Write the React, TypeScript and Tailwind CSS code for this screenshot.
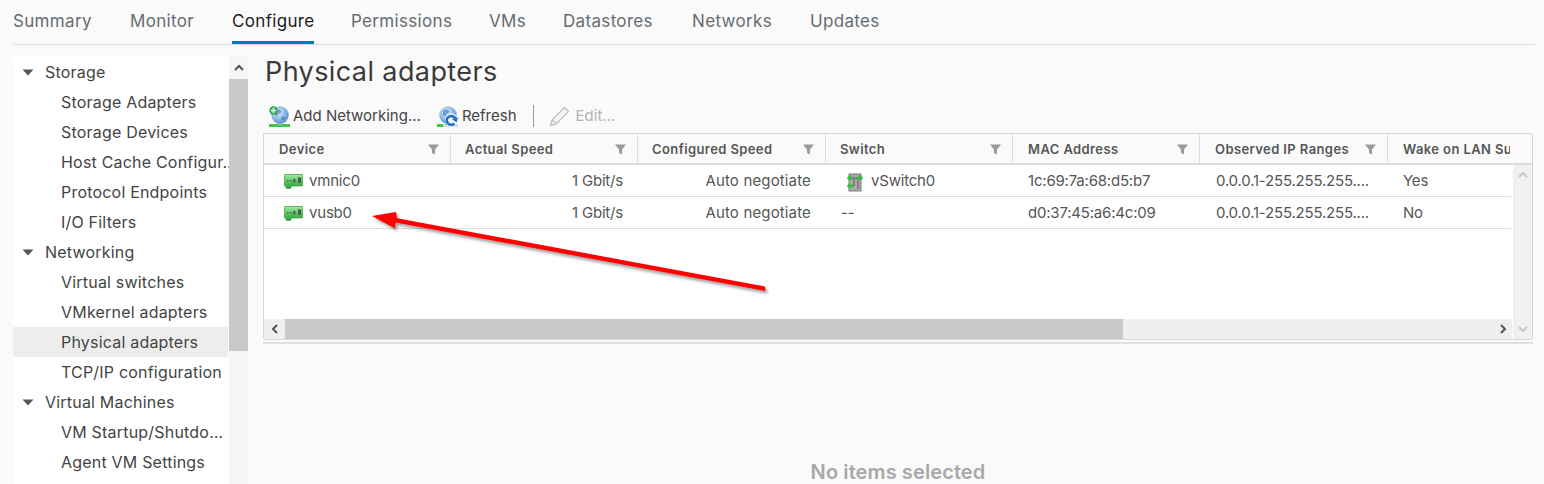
const font = { fontFamily: '"Inter", "Noto Sans", sans-serif' };

function Nic() {
  return (
    <svg width="19" height="17" viewBox="0 0 19 17" className="shrink-0">
      <defs>
        <linearGradient id="nicg" x1="0" y1="0" x2="0" y2="1">
          <stop offset="0" stopColor="#a5e8a0" />
          <stop offset="0.55" stopColor="#58c060" />
          <stop offset="1" stopColor="#2f9e3f" />
        </linearGradient>
      </defs>
      <path d="M0.5 1.5H18.5V13H7.5L6.5 15.5H2.5L1.5 13H0.5Z" fill="url(#nicg)" stroke="#45a34e" strokeWidth="0.8" />
      <rect x="3" y="7" width="1.6" height="1.6" fill="#4d6f55" />
      <rect x="6" y="7" width="1.6" height="1.6" fill="#4d6f55" />
      <rect x="9" y="6" width="2.6" height="3.4" fill="#4d6f55" />
      <rect x="14" y="4.5" width="3" height="5.5" fill="#43604b" />
    </svg>
  );
}

function Funnel() {
  return (
    <svg width="11" height="11" viewBox="0 0 11 11" className="shrink-0">
      <path d="M0 0.5H11L7 5.5V10.5L4 9V5.5Z" fill="#9a9a9a" />
    </svg>
  );
}

function Globe({ kind }: { kind: "add" | "refresh" }) {
  return (
    <svg width="21" height="21" viewBox="0 0 21 21" className="shrink-0">
      <defs>
        <radialGradient id={"gl" + kind} cx="0.4" cy="0.35" r="0.7">
          <stop offset="0" stopColor="#e4f2fc" />
          <stop offset="1" stopColor="#4a8fd2" />
        </radialGradient>
      </defs>
      <rect x="0" y="18" width="21" height="3" fill={kind === "add" ? "#43c743" : "#d5dde3"} />
      {kind === "refresh" && <rect x="0" y="18" width="6" height="3" fill="#43c743" />}
      <rect x="8.5" y="15" width="4" height="4" fill="#a8bac8" />
      <circle cx="11" cy="9" r="8.7" fill={`url(#gl${kind})`} />
      <path d="M6 5c2-2 5-2 6 0s-2 2-3 4-3 1-3-1zM13 11c2-1 3 0 3 1s-2 3-3 2-1-2 0-3z" fill="#2e6fb5" opacity="0.6" />
      {kind === "add" && (
        <>
          <circle cx="4.5" cy="4.5" r="4.2" fill="#2fa84f" />
          <path d="M4.5 1.8V7.2M1.8 4.5H7.2" stroke="#e5fae5" strokeWidth="1.6" />
        </>
      )}
      {kind === "refresh" && (
        <>
          <circle cx="14.5" cy="14" r="6.4" fill="#fff" opacity="0.9" />
          <path d="M18.5 13.5a4.4 4.4 0 1 0-1 3.8" fill="none" stroke="#1d6fc4" strokeWidth="2.6" />
          <path d="M21 11L19.6 16.4L15.2 13.2Z" fill="#1d6fc4" />
        </>
      )}
    </svg>
  );
}

function Pencil() {
  return (
    <svg width="21" height="21" viewBox="0 0 21 21" className="shrink-0">
      <path d="M15.5 1.5L19.5 5.5L7 18L1.5 19.5L3 14Z" fill="#f4f4f4" stroke="#c4c4c4" strokeWidth="1.5" strokeLinejoin="round" />
      <path d="M3.5 14L7 17.5" stroke="#c4c4c4" strokeWidth="1.2" />
    </svg>
  );
}

function SwitchIcon() {
  return (
    <svg width="20" height="20" viewBox="0 0 20 20" className="shrink-0">
      <rect x="4" y="2" width="12" height="17" fill="#a9a9a9" stroke="#7c7c7c" />
      <path d="M2 6H18M2 14H9M9 6V14M13 6V17" stroke="#5f5f5f" strokeWidth="1" fill="none" />
      <circle cx="5" cy="6" r="2.4" fill="#36c23f" />
      <circle cx="15" cy="6" r="2.4" fill="#36c23f" />
      <circle cx="5" cy="14" r="2.4" fill="#36c23f" />
    </svg>
  );
}

function Caret() {
  return (
    <svg width="12" height="7" viewBox="0 0 12 7" className="shrink-0">
      <path d="M0.5 0.5H11.5L6 6.5Z" fill="#565656" />
    </svg>
  );
}

function Chevron({ d, color, size = 12 }: { d: string; color: string; size?: number }) {
  return (
    <svg width={size} height={size} viewBox="0 0 12 12" className="shrink-0">
      <path d={d} fill="none" stroke={color} strokeWidth="2" />
    </svg>
  );
}

const side: { t: string; group?: boolean; sel?: boolean }[] = [
  { t: "Storage", group: true },
  { t: "Storage Adapters" },
  { t: "Storage Devices" },
  { t: "Host Cache Configur…" },
  { t: "Protocol Endpoints" },
  { t: "I/O Filters" },
  { t: "Networking", group: true },
  { t: "Virtual switches" },
  { t: "VMkernel adapters" },
  { t: "Physical adapters", sel: true },
  { t: "TCP/IP configuration" },
  { t: "Virtual Machines", group: true },
  { t: "VM Startup/Shutdo…" },
  { t: "Agent VM Settings" },
];

const cols = ["Device", "Actual Speed", "Configured Speed", "Switch", "MAC Address", "Observed IP Ranges", "Wake on LAN Su"];

const gridCols = "grid grid-cols-[187px_187px_188px_187px_187px_188px_123px]";
const cell = "flex items-center pt-[2px] text-[15px] text-[#565656] whitespace-nowrap tracking-[-0.2px]";

function Row({ dev, sw, mac, wake }: { dev: string; sw: React.ReactNode; mac: string; wake: string }) {
  return (
    <div className={`${gridCols} h-[32px] border-b border-[#dedede] mr-[1px]`}>
      <div className={`${cell} pl-[20px] gap-[6px]`}>
        <Nic />
        <span>{dev}</span>
      </div>
      <div className={`${cell} justify-end pr-[15px]`}>1 Gbit/s</div>
      <div className={`${cell} justify-end pr-[15px] tracking-[0.15px]`}>Auto negotiate</div>
      <div className={`${cell} pl-[15px]`}>{sw}</div>
      <div className={`${cell} pl-[15px]`}>{mac}</div>
      <div className={`${cell} pl-[16px]`}>0.0.0.1-255.255.255....</div>
      <div className={`${cell} pl-[15px]`}>{wake}</div>
    </div>
  );
}

export default function App() {
  return (
    <div style={font} className="relative w-[1544px] h-[484px] overflow-hidden bg-[#fafafa]">
      <div className="ml-[13px] mr-[9px] h-[45px] flex items-stretch border-b border-[#dcdcdc] text-[17px] tracking-[0.33px] text-[#666c72]">
        <div className="w-[117px] flex items-center h-[44px]">Summary</div>
        <div className="w-[102px] flex items-center h-[44px]">Monitor</div>
        <div className="w-[119px] h-[44px] relative flex items-center text-[#1a1a1a]">
          <span>Configure</span>
          <div className="absolute left-0 w-[82px] bottom-0 h-[3px] bg-[#0079b8]" />
        </div>
        <div className="w-[138px] flex items-center h-[44px]">Permissions</div>
        <div className="w-[74px] flex items-center h-[44px]">VMs</div>
        <div className="w-[129px] flex items-center h-[44px]">Datastores</div>
        <div className="w-[118px] flex items-center h-[44px]">Networks</div>
        <div className="flex items-center h-[44px]">Updates</div>
      </div>

      <div className="flex mt-[12px] ml-[13px]">
        <div className="w-[216px] h-[427px] bg-white">
          {side.map((s) => (
            <div
              key={s.t}
              className={`h-[30px] flex items-center text-[16px] tracking-[0.2px] text-[#444] whitespace-nowrap ${s.group ? "pl-[9px] gap-[11px]" : "pl-[48px]"} ${s.sel ? "bg-[#ededed] mr-[1px]" : ""}`}
            >
              {s.group && <Caret />}
              <span>{s.t}</span>
            </div>
          ))}
        </div>
        <div className="w-[19px] h-[427px] flex flex-col bg-[#f5f5f5]">
          <div className="h-[22px] flex items-center justify-center">
            <Chevron d="M2 8L6 4L10 8" color="#555" />
          </div>
          <div className="h-[272px] bg-[#c9c9c9]" />
        </div>

        <div className="ml-[15px] w-[1270px]">
          <div className="h-[31px] pl-[2px] text-[27px] leading-[30px] text-[#3a3a3a] tracking-[0.4px]">Physical adapters</div>
          <div className="h-[45px] pt-[11px] flex items-center pl-[6px] text-[15px] text-[#454545]">
            <Globe kind="add" />
            <span className="ml-[3px]">Add Networking...</span>
            <span className="ml-[16px]"><Globe kind="refresh" /></span>
            <span className="ml-[4px]">Refresh</span>
            <div className="ml-[16px] w-px h-[22px] bg-[#9c9c9c]" />
            <span className="ml-[15px]"><Pencil /></span>
            <span className="ml-[6px] text-[#b4b4b4]">Edit...</span>
          </div>

          <div className="w-[1270px] h-[207px] bg-white border border-[#d7d7d7] rounded-[2px] overflow-hidden">
            <div className={`${gridCols} h-[31px] bg-[#fafafa] border-b-2 border-[#dcdcdc]`}>
              {cols.map((c, i) => (
                <div
                  key={c}
                  className={`flex items-center justify-between overflow-hidden pt-[2px] whitespace-nowrap text-[13px] tracking-[0.4px] font-semibold text-[#565656] ${i >= 1 && i <= 3 ? "pl-[14px]" : "pl-[15px]"} ${i < 6 ? "border-r border-[#dedede] pr-[11px]" : ""}`}
                >
                  <span className={i === 6 ? "block w-[107px] overflow-hidden" : ""}>{c}</span>
                  {i < 6 && <Funnel />}
                </div>
              ))}
            </div>
            <div className="flex h-[174px]">
              <div className="w-[1248px] flex flex-col">
                <div className="h-[154px]">
                  <Row
                    dev="vmnic0"
                    sw={
                      <span className="flex items-center gap-[6px] ml-[4px]">
                        <SwitchIcon />
                        vSwitch0
                      </span>
                    }
                    mac="1c:69:7a:68:d5:b7"
                    wake="Yes"
                  />
                  <Row dev="vusb0" sw="--" mac="d0:37:45:a6:4c:09" wake="No" />
                </div>
                <div className="h-[20px] bg-[#efefef] flex items-center">
                  <div className="w-[21px] flex justify-center">
                    <Chevron d="M8 2L4 6L8 10" color="#555" />
                  </div>
                  <div className="w-[838px] h-[20px] bg-[#c8c8c8]" />
                  <div className="flex-1 flex justify-end pr-[3px]">
                    <Chevron d="M4 2L8 6L4 10" color="#555" />
                  </div>
                </div>
              </div>
              <div className="ml-[1px] w-[20px] bg-[#f0f0f0] flex flex-col justify-between py-[4px] items-center">
                <Chevron d="M2 8L6 4L10 8" color="#c8c8c8" />
                <Chevron d="M2 4L6 8L10 4" color="#c8c8c8" />
              </div>
            </div>
          </div>
          <div className="mt-[2px] h-[2px] w-[1270px] bg-[#e0e0e0]" />
          <div className="mt-[113px] text-center text-[20px] tracking-[0.1px] font-semibold text-[#a8a8a8]">No items selected</div>
        </div>
      </div>

      <svg className="absolute left-0 top-0 pointer-events-none" width="1544" height="484" viewBox="0 0 1544 484">
        <defs>
          <filter id="sh" x="-5%" y="-20%" width="110%" height="150%">
            <feDropShadow dx="2" dy="2.5" stdDeviation="1.5" floodColor="#000" floodOpacity="0.4" />
          </filter>
        </defs>
        <path d="M372 216L396 212L397 218.2L765 286.5L765.5 291L395.5 222.5L395 228.5Z" fill="#ff0000" filter="url(#sh)" />
      </svg>
    </div>
  );
}
